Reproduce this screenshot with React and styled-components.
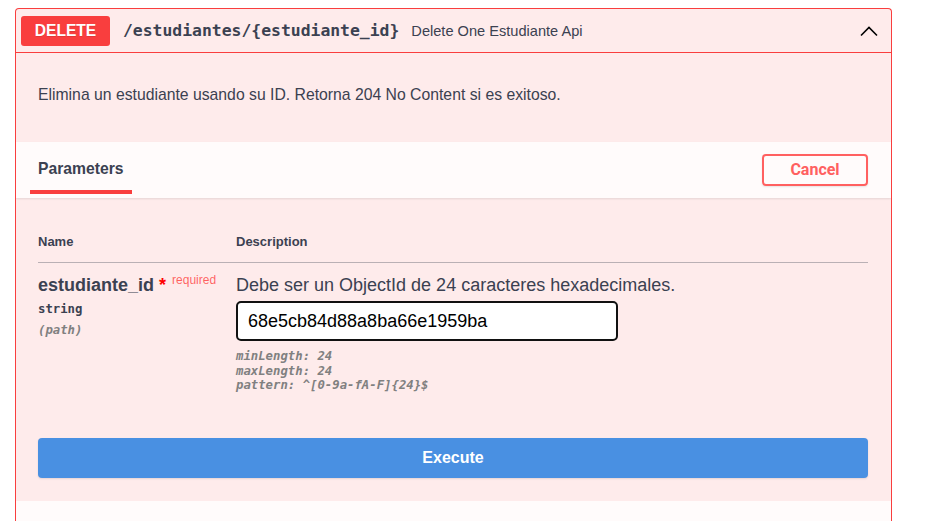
import React, { useEffect, useRef } from "react";
import styled, { createGlobalStyle } from "styled-components";

const Global = createGlobalStyle`
  html, body { margin: 0; padding: 0; background: #fff; }
  body { font-family: "Liberation Sans", Arial, sans-serif; color: #3b4151; }
  * { box-sizing: border-box; }
`;

const Page = styled.div`
  padding: 8px 33px 0 15px;
`;

const OpBlock = styled.div`
  border: 1px solid #f93e3e;
  border-bottom: none;
  border-radius: 4px 4px 0 0;
  background: rgba(249, 62, 62, 0.1);
  height: 513px;
  overflow: hidden;
`;

const Summary = styled.div`
  display: flex;
  align-items: center;
  padding: 6px 12px 6px 5px;
  height: 44px;
  border-bottom: 1px solid #f93e3e;
`;

const Method = styled.span`
  display: inline-flex;
  align-items: center;
  justify-content: center;
  width: 89px;
  height: 30px;
  border-radius: 3px;
  background: #f93e3e;
  color: #fff;
  font-weight: 700;
  font-size: 15.6px;
  text-shadow: 0 1px 0 rgba(0, 0, 0, 0.1);
`;

const Path = styled.span`
  margin-left: 13px;
  font-family: "DejaVu Sans Mono", monospace;
  font-weight: 700;
  font-size: 16.4px;
  color: #3b4151;
`;

const SummaryDesc = styled.span`
  margin-left: 12px;
  font-size: 14.6px;
  color: #3b4151;
  flex: 1;
`;

const Chevron = styled.svg`
  width: 20px;
  height: 20px;
`;

const Description = styled.div`
  height: 89px;
  padding: 33px 22px 0;
  font-size: 15.75px;
  color: #3b4151;
`;

const SectionHeader = styled.div`
  display: flex;
  align-items: center;
  justify-content: space-between;
  height: 56px;
  padding: 0 23px 0 14px;
  background: rgba(255, 255, 255, 0.8);
  box-shadow: 0 1px 2px rgba(0, 0, 0, 0.1);
`;

const Tab = styled.div`
  align-self: flex-start;
  display: flex;
  align-items: center;
  width: 102px;
  height: 52px;
  padding: 5px 8px 0;
  font-weight: 700;
  font-size: 15.7px;
  color: #3b4151;
  border-bottom: 4px solid #f93e3e;
`;

const CancelButton = styled.button`
  width: 106px;
  height: 32px;
  margin-top: -1px;
  border: 2px solid #ff6060;
  border-radius: 4px;
  background: transparent;
  color: #ff6060;
  font-family: Roboto, "Liberation Sans", sans-serif;
  font-weight: 700;
  font-size: 16px;
  box-shadow: 0 1px 2px rgba(0, 0, 0, 0.1);
`;

const Params = styled.div`
  padding: 36px 23px 0 22px;
`;

const HeadRow = styled.div`
  display: grid;
  grid-template-columns: 198px 1fr;
  padding-bottom: 13px;
  border-bottom: 1px solid rgba(59, 65, 81, 0.35);
  font-size: 13px;
  font-weight: 700;
  color: #3b4151;
`;

const ParamRow = styled.div`
  display: grid;
  grid-template-columns: 198px 1fr;
  padding-top: 10px;
`;

const NameCell = styled.div`
  display: flex;
  flex-direction: column;
`;

const ParamName = styled.div`
  font-size: 18px;
  font-weight: 700;
  color: #3b4151;
  line-height: 24px;
`;

const Star = styled.span`
  color: red;
  margin-left: 5px;
`;

const Required = styled.sup`
  font-size: 12px;
  font-weight: 400;
  color: rgba(255, 0, 0, 0.6);
  position: relative;
  top: -5px;
  vertical-align: top;
  margin-left: 6px;
`;

const Mono = styled.div`
  font-family: "DejaVu Sans Mono", monospace;
  font-size: 12.3px;
  font-weight: 600;
  color: ${(p) => (p.$muted ? "gray" : "#3b4151")};
  font-style: ${(p) => (p.$italic ? "italic" : "normal")};
  line-height: ${(p) => p.$lh || "14.5px"};
  margin-top: ${(p) => p.$mt || "0"};
`;

const DescCell = styled.div`
  display: flex;
  flex-direction: column;
`;

const DescText = styled.div`
  font-size: 18px;
  color: #3b4151;
  line-height: 24px;
`;

const Input = styled.input`
  margin-top: 4px;
  width: 382px;
  height: 40px;
  border: 2px solid #111;
  border-radius: 5px;
  background: #fff;
  padding: 0 10px;
  font-family: "Liberation Sans", Arial, sans-serif;
  font-size: 18px;
  color: #000;
  outline: none;
`;

const Constraints = styled.div`
  margin-top: 8px;
`;

const ExecuteWrap = styled.div`
  padding: 45px 23px 0 22px;
`;

const ExecuteButton = styled.button`
  width: 100%;
  height: 40px;
  border: none;
  border-radius: 4px;
  background: #4990e2;
  color: #fff;
  font-family: "Liberation Sans", Arial, sans-serif;
  font-weight: 700;
  font-size: 16px;
  box-shadow: 0 1px 2px rgba(0, 0, 0, 0.1);
`;

const ResponsesHeader = styled.div`
  margin-top: 23px;
  height: 40px;
  background: rgba(255, 255, 255, 0.8);
`;

export default function App() {
  const ref = useRef(null);
  useEffect(() => {
    const el = ref.current;
    if (el) {
      el.focus();
      const n = el.value.length;
      el.setSelectionRange(n, n);
    }
  }, []);
  return (
    <>
      <Global />
      <Page>
        <OpBlock>
          <Summary>
            <Method>DELETE</Method>
            <Path>/estudiantes/{"{"}estudiante_id{"}"}</Path>
            <SummaryDesc>Delete One Estudiante Api</SummaryDesc>
            <Chevron viewBox="0 0 20 20">
              <path d="M2 14.5 L10 6.5 L18 14.5" fill="none" stroke="#000" strokeWidth="1.6" />
            </Chevron>
          </Summary>
          <Description>
            Elimina un estudiante usando su ID. Retorna 204 No Content si es exitoso.
          </Description>
          <SectionHeader>
            <Tab>Parameters</Tab>
            <CancelButton>Cancel</CancelButton>
          </SectionHeader>
          <Params>
            <HeadRow>
              <div>Name</div>
              <div>Description</div>
            </HeadRow>
            <ParamRow>
              <NameCell>
                <ParamName>
                  estudiante_id<Star>*</Star>
                  <Required>required</Required>
                </ParamName>
                <Mono $mt="4px" $lh="16px">string</Mono>
                <Mono $italic $muted $mt="5px" $lh="16px">(path)</Mono>
              </NameCell>
              <DescCell>
                <DescText>Debe ser un ObjectId de 24 caracteres hexadecimales.</DescText>
                <Input ref={ref} defaultValue="68e5cb84d88a8ba66e1959ba" />
                <Constraints>
                  <Mono $italic $muted>minLength: 24</Mono>
                  <Mono $italic $muted>maxLength: 24</Mono>
                  <Mono $italic $muted>pattern: ^[0-9a-fA-F]{"{"}24{"}"}$</Mono>
                </Constraints>
              </DescCell>
            </ParamRow>
          </Params>
          <ExecuteWrap>
            <ExecuteButton>Execute</ExecuteButton>
          </ExecuteWrap>
          <ResponsesHeader />
        </OpBlock>
      </Page>
    </>
  );
}
